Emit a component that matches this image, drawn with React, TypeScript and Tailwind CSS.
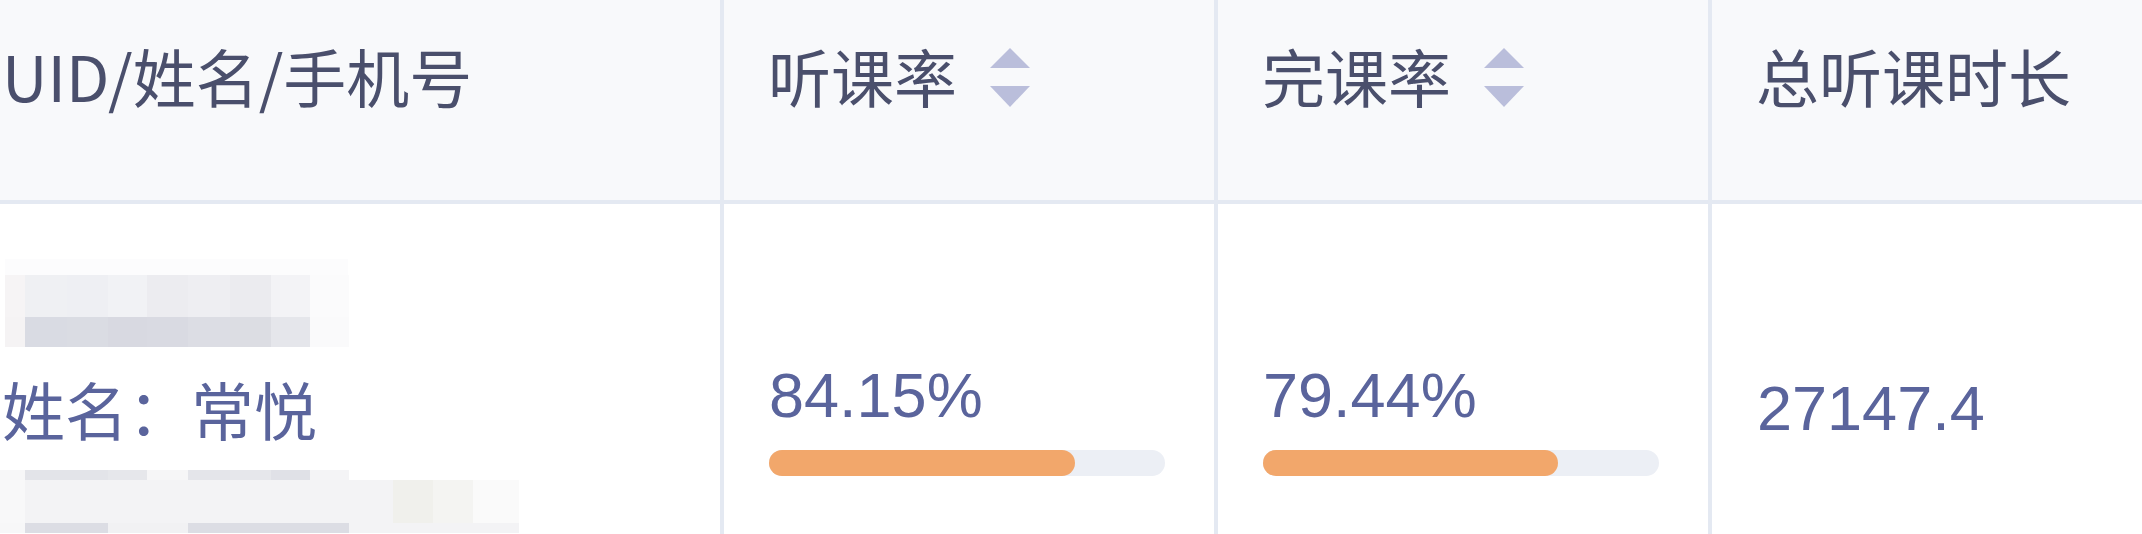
import React from "react";

// mosaic blocks that hide the UID / phone number
type Block = { w: string; bg: string };

const uidTop: Block[] = [{ w: "w-[343px]", bg: "bg-[#fcfcfd]" }];
const uidMid: Block[] = [
  { w: "w-[20px]", bg: "bg-[#f6f4f5]" },
  { w: "w-[42px]", bg: "bg-[#eff0f3]" },
  { w: "w-[41px]", bg: "bg-[#eeeff3]" },
  { w: "w-[39px]", bg: "bg-[#f1f2f5]" },
  { w: "w-[41px]", bg: "bg-[#ececf0]" },
  { w: "w-[42px]", bg: "bg-[#eeeef2]" },
  { w: "w-[41px]", bg: "bg-[#ebebef]" },
  { w: "w-[39px]", bg: "bg-[#f3f3f6]" },
  { w: "w-[39px]", bg: "bg-[#fbfbfc]" },
];
const uidLow: Block[] = [
  { w: "w-[20px]", bg: "bg-[#f5f3f4]" },
  { w: "w-[42px]", bg: "bg-[#d9dbe3]" },
  { w: "w-[41px]", bg: "bg-[#dadce3]" },
  { w: "w-[39px]", bg: "bg-[#d8d9e1]" },
  { w: "w-[41px]", bg: "bg-[#d9dae2]" },
  { w: "w-[42px]", bg: "bg-[#dcdde4]" },
  { w: "w-[41px]", bg: "bg-[#dcdde3]" },
  { w: "w-[39px]", bg: "bg-[#e5e6eb]" },
  { w: "w-[39px]", bg: "bg-[#fafafb]" },
];
const phoneTop: Block[] = [
  { w: "w-[25px]", bg: "bg-[#f7f7f8]" },
  { w: "w-[42px]", bg: "bg-[#e3e4e9]" },
  { w: "w-[41px]", bg: "bg-[#e3e4e9]" },
  { w: "w-[39px]", bg: "bg-[#e6e7eb]" },
  { w: "w-[41px]", bg: "bg-[#f6f6f7]" },
  { w: "w-[42px]", bg: "bg-[#e4e5ea]" },
  { w: "w-[41px]", bg: "bg-[#e6e7eb]" },
  { w: "w-[39px]", bg: "bg-[#e0e1e7]" },
  { w: "w-[39px]", bg: "bg-[#f4f4f6]" },
];
const phoneMid: Block[] = [
  { w: "w-[25px]", bg: "bg-[#f8f8f9]" },
  { w: "w-[368px]", bg: "bg-[#f3f3f5]" },
  { w: "w-[40px]", bg: "bg-[#f0f0ec]" },
  { w: "w-[40px]", bg: "bg-[#f4f4f2]" },
  { w: "w-[46px]", bg: "bg-[#fafafa]" },
];
const phoneLow: Block[] = [
  { w: "w-[25px]", bg: "bg-[#f7f7f8]" },
  { w: "w-[83px]", bg: "bg-[#dcdde4]" },
  { w: "w-[80px]", bg: "bg-[#f1f1f3]" },
  { w: "w-[161px]", bg: "bg-[#dcdde4]" },
  { w: "w-[170px]", bg: "bg-[#f3f3f5]" },
];

function MosaicRow({ blocks, h }: { blocks: Block[]; h: string }) {
  return (
    <div className={`flex ${h}`}>
      {blocks.map((b, i) => (
        <div key={i} className={`${b.w} h-full ${b.bg}`} />
      ))}
    </div>
  );
}

function SortIcon() {
  return (
    <svg width="40" height="60" viewBox="0 0 40 60" className="mt-[5px] ml-[33px] shrink-0">
      <polygon points="20,0 40,20 0,20" fill="#babedb" />
      <polygon points="0,38 40,38 20,59" fill="#babedb" />
    </svg>
  );
}

function Progress({ value, fill }: { value: string; fill: string }) {
  return (
    <div className="pt-[160px] pl-[45px]">
      <div className="font-['Liberation_Sans','Noto_Sans_CJK_SC',sans-serif] text-[63px] leading-[63px] text-[#5a649c]">
        {value}
      </div>
      <div className="mt-[23px] w-[396px] h-[26px] rounded-full bg-[#eceff5]">
        <div className={`${fill} h-full rounded-full bg-[#f2a76b]`} />
      </div>
    </div>
  );
}

const headText =
  "font-['Noto_Sans_CJK_SC','Liberation_Sans',sans-serif] text-[63px] leading-[63px] text-[#4a4f6c] whitespace-nowrap";

export default function App() {
  return (
    <div className="w-[2142px] h-[534px] overflow-hidden bg-white">
      <div className="grid grid-cols-[724px_494px_494px_1fr]">
        {/* header */}
        <div className="h-[204px] bg-[#f8f9fb] border-r-4 border-b-4 border-[#e4e9f2] pt-[43px] pl-[2px]">
          <span className={headText}>UID/姓名/手机号</span>
        </div>
        <div className="h-[204px] bg-[#f8f9fb] border-r-4 border-b-4 border-[#e4e9f2] pt-[43px] pl-[44px] flex items-start">
          <span className={headText}>听课率</span>
          <SortIcon />
        </div>
        <div className="h-[204px] bg-[#f8f9fb] border-r-4 border-b-4 border-[#e4e9f2] pt-[43px] pl-[44px] flex items-start">
          <span className={headText}>完课率</span>
          <SortIcon />
        </div>
        <div className="h-[204px] bg-[#f8f9fb] border-b-4 border-[#e4e9f2] pt-[43px] pl-[44px]">
          <span className={headText}>总听课时长</span>
        </div>

        {/* body row */}
        <div className="h-[330px] border-r-4 border-[#e4e9f2] pt-[55px] pl-[5px]">
          <MosaicRow blocks={uidTop} h="h-[16px]" />
          <MosaicRow blocks={uidMid} h="h-[42px]" />
          <MosaicRow blocks={uidLow} h="h-[30px]" />
          <div className="mt-[29px] -ml-[3px] font-['Noto_Sans_CJK_SC','Liberation_Sans',sans-serif] text-[63px] leading-[63px] text-[#5a649c]">
            姓名：常悦
          </div>
          <div className="mt-[31px] -ml-[5px]">
            <MosaicRow blocks={phoneTop} h="h-[10px]" />
            <MosaicRow blocks={phoneMid} h="h-[43px]" />
            <MosaicRow blocks={phoneLow} h="h-[10px]" />
          </div>
        </div>
        <div className="h-[330px] border-r-4 border-[#e4e9f2]">
          <Progress value="84.15%" fill="w-[306px]" />
        </div>
        <div className="h-[330px] border-r-4 border-[#e4e9f2]">
          <Progress value="79.44%" fill="w-[295px]" />
        </div>
        <div className="h-[330px] pt-[173px] pl-[45px]">
          <div className="font-['Liberation_Sans','Noto_Sans_CJK_SC',sans-serif] text-[63px] leading-[63px] text-[#5a649c]">
            27147.4
          </div>
        </div>
      </div>
    </div>
  );
}
